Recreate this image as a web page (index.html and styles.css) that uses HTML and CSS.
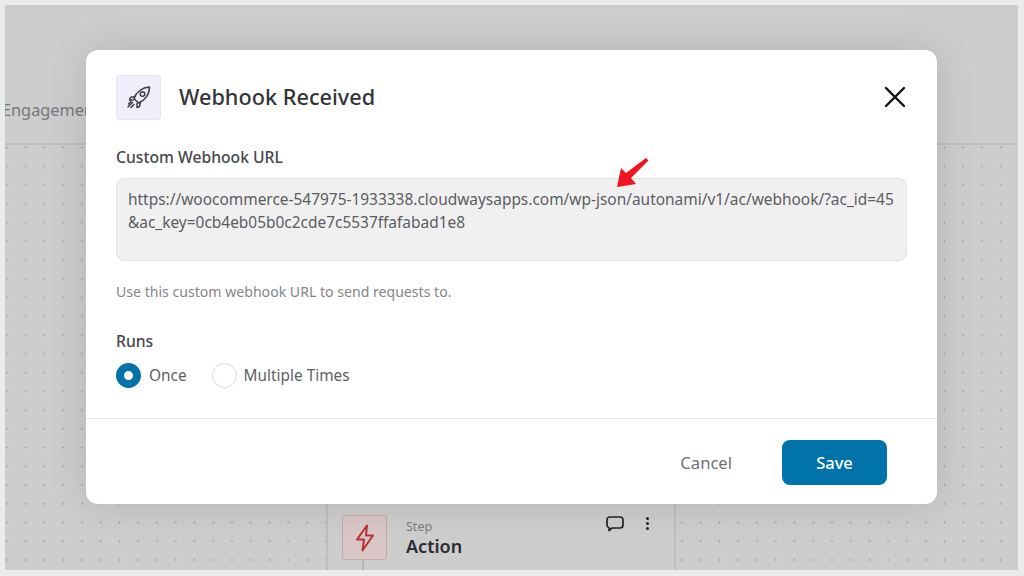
FILE: index.html
```html
<!DOCTYPE html>
<html lang="en">
<head>
    <meta charset="UTF-8">
    <meta name="viewport" content="width=device-width, initial-scale=1.0">
    <title>Webhook Received</title>
    <link rel="stylesheet" href="styles.css">
</head>
<body>
    <div class="stage">
        <div class="topbar">
            <span class="tab-name">Engagement</span>
        </div>
        <div class="canvas">
            <div class="step-card">
                <div class="step-icon">
                    <svg width="20" height="28" viewBox="0 0 20 28" fill="none" stroke="#b53434" stroke-width="2" stroke-linejoin="round">
                        <path d="M12 1.5 L2 15.5 H9 L7.5 26.5 L18 11.5 H11 Z"/>
                    </svg>
                </div>
                <div class="step-text">
                    <div class="step-kind">Step</div>
                    <div class="step-name">Action</div>
                </div>
                <div class="step-tools">
                    <svg width="18" height="16" viewBox="0 0 18 16" fill="none" stroke="#222" stroke-width="1.7" stroke-linejoin="round">
                        <path d="M4 1 H14 Q17 1 17 4 V9 Q17 12 14 12 H6 L3 14.5 V11.8 Q1 11 1 9 V4 Q1 1 4 1 Z"/>
                    </svg>
                    <div class="kebab"><i></i><i></i><i></i></div>
                </div>
                <div class="step-line"></div>
            </div>
        </div>

        <div class="modal">
            <div class="modal-head">
                <div class="modal-icon">
                    <svg width="26" height="26" viewBox="0 0 26 26" fill="none" stroke="#3c3c44" stroke-width="1.5" stroke-linejoin="round" stroke-linecap="round">
                        <path d="M8 13.5 C10 7 16 2.5 23.5 2 C23.5 9.500 19 15.500 12.500 18 Z"/>
                        <circle cx="16.500" cy="9" r="2.300"/>
                        <path d="M8.800 11.500 L4.500 12.500 L3.500 15 H7.500"/>
                        <path d="M14.500 17.200 L13.500 21.500 L11 22.500 V18.500"/>
                        <path d="M6.500 17.500 L2 22 M8 19.500 L5 22.500 M5 16.500 L2.500 19"/>
                    </svg>
                </div>
                <h2 class="modal-title">Webhook Received</h2>
                <svg class="modal-close" width="22" height="22" viewBox="0 0 22 22" fill="none" stroke="#111" stroke-width="2.400" stroke-linecap="round">
                    <path d="M2 2 L20 20 M20 2 L2 20"/>
                </svg>
            </div>

            <div class="modal-body">
                <div class="field-label">Custom Webhook URL</div>
                <div class="url-box">https://woocommerce-547975-1933338.cloudwaysapps.com/wp-json/autonami/v1/ac/webhook/?ac_id=45<br>&amp;ac_key=0cb4eb05b0c2cde7c5537ffafabad1e8</div>
                <p class="help-text">Use this custom webhook URL to send requests to.</p>
                <div class="field-label runs-label">Runs</div>
                <div class="radio-row">
                    <span class="radio checked"></span>
                    <span class="radio-text">Once</span>
                    <span class="radio"></span>
                    <span class="radio-text">Multiple Times</span>
                </div>
            </div>

            <div class="modal-foot">
                <span class="cancel">Cancel</span>
                <button class="save">Save</button>
            </div>

            <svg class="arrow" width="34" height="30" viewBox="0 0 34 30">
                <path d="M1 29 L5 10 L10 15 L30 0 L32.500 2.500 L15 20 L20 26 Z" fill="#f01420"/>
            </svg>
        </div>
    </div>
</body>
</html>
```

FILE: styles.css
```css
* {
    box-sizing: border-box;
}

body {
    margin: 0;
    width: 1024px;
    height: 576px;
    padding: 5px 6px 6px 5px;
    overflow: hidden;
    background-color: #e9ebec;
    font-family: "Noto Sans", "Open Sans", sans-serif;
    color: #3a3a40;
}

.stage {
    position: relative;
    display: flex;
    flex-direction: column;
    height: 565px;
    overflow: hidden;
    background-color: #cdcdcd;
}

.topbar {
    height: 140px;
    flex-shrink: 0;
    padding-top: 93px;
    border-bottom: 2px solid #bfbfc1;
    overflow: hidden;
}

.tab-name {
    display: block;
    margin-left: -3px;
    font-size: 16.300px;
    line-height: 24px;
    color: #77777b;
}

.canvas {
    flex: 1;
    display: flex;
    flex-direction: column;
    justify-content: flex-end;
    background-image: radial-gradient(circle, #a9a9ab 0.9px, transparent 1.2px);
    background-size: 18.75px 18.75px;
    background-position: -7.4px -6.9px;
}

.step-card {
    position: relative;
    display: flex;
    width: 350px;
    height: 66px;
    margin-left: 321px;
    padding: 11px 14px 0;
    background-color: #cdcdcd;
    border-left: 2px solid #bdbdbf;
    border-right: 2px solid #bdbdbf;
}

.step-icon {
    display: flex;
    align-items: center;
    justify-content: center;
    width: 45px;
    height: 45px;
    background-color: #d9c6c6;
    border: 1px solid #c9a8a8;
    border-radius: 3px;
}

.step-line {
    position: absolute;
    left: 34px;
    top: 56px;
    width: 2px;
    height: 10px;
    background-color: #b5b5b7;
}

.step-text {
    margin-left: 19px;
}

.step-kind {
    font-size: 12.500px;
    line-height: 15px;
    margin-top: 4px;
    color: #7d7d82;
}

.step-name {
    font-size: 18px;
    line-height: 24px;
    font-weight: 600;
    color: #2c2c33;
}

.step-tools {
    position: absolute;
    top: 12px;
    right: 25px;
    display: flex;
    gap: 22px;
}

.kebab {
    display: flex;
    flex-direction: column;
    gap: 2px;
    padding-top: 1px;
}

.kebab i {
    width: 3px;
    height: 3px;
    border-radius: 50%;
    background-color: #222;
}

.modal {
    position: absolute;
    left: 81px;
    top: 45px;
    width: 851px;
    height: 454px;
    background-color: #fff;
    border-radius: 12px;
    box-shadow: 0 0 40px rgba(0, 0, 0, 0.12);
}

.modal-head {
    display: flex;
    align-items: center;
    padding: 25px 31px 0 30px;
}

.modal-icon {
    display: flex;
    align-items: center;
    justify-content: center;
    width: 45px;
    height: 45px;
    background-color: #eeeffa;
    border: 1px solid #e5e6f3;
    border-radius: 3px;
}

.modal-title {
    flex: 1;
    margin: 0 0 1px 18px;
    font-size: 21.700px;
    line-height: 30px;
    font-weight: 500;
    color: #333338;
}

.modal-close {
    margin-bottom: 2px;
}

.modal-body {
    padding: 26px 30px 0;
}

.field-label {
    font-size: 15.700px;
    line-height: 22px;
    font-weight: 500;
    color: #46464c;
}

.url-box {
    height: 83px;
    margin-top: 10px;
    padding: 9px 11px;
    font-size: 15.450px;
    line-height: 23px;
    white-space: nowrap;
    color: #5c5c62;
    background-color: #f0f0f1;
    border: 1px solid #e3e3e6;
    border-radius: 8px;
}

.help-text {
    margin: 20px 0 0;
    font-size: 14.100px;
    line-height: 22px;
    color: #85858a;
}

.runs-label {
    margin-top: 27px;
}

.radio-row {
    display: flex;
    align-items: center;
    margin-top: 11px;
}

.radio {
    width: 25px;
    height: 25px;
    border-radius: 50%;
    background-color: #fff;
    border: 1px solid #dcdcde;
}

.radio.checked {
    background-color: #fff;
    border: 8px solid #0073aa;
}

.radio-text {
    margin: 0 25px 0 8px;
    font-size: 15.400px;
    color: #606066;
}

.radio + .radio-text + .radio + .radio-text {
    margin-left: 7px;
}

.modal-foot {
    display: flex;
    align-items: center;
    justify-content: flex-end;
    margin-top: 30px;
    padding: 21px 50px 0 0;
    border-top: 1px solid #e6e6e8;
}

.cancel {
    margin-right: 50px;
    font-size: 16.600px;
    color: #6f6f7c;
}

.save {
    width: 105px;
    height: 45px;
    font-family: inherit;
    font-size: 16.500px;
    font-weight: 500;
    color: #fff;
    background-color: #0073aa;
    border: none;
    border-radius: 8px;
}

.arrow {
    position: absolute;
    left: 530px;
    top: 108px;
}
```
